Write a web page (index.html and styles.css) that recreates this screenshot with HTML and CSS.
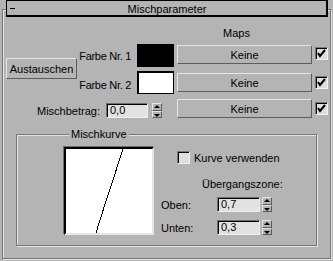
FILE: index.html
```html
<!DOCTYPE html>
<html>
<head>
  <title>Mischparameter</title>
  <link rel="stylesheet" href="styles.css">
</head>
<body>
  <div class="rollout">
    <div class="rollout-title">
      <span class="minus"></span>
      <span class="title-text">Mischparameter</span>
      <span></span>
    </div>

    <div class="params">
      <div class="maps-label">Maps</div>

      <button class="btn swap">Austauschen</button>

      <div class="lbl row1">Farbe Nr. 1</div>
      <div class="swatch row1 black"></div>
      <button class="btn map row1">Keine</button>
      <span class="check row1 on"><svg width="9" height="9" viewBox="0 0 9 9"><path d="M1 4 L3 7 L8 1" fill="none" stroke="#000" stroke-width="2"/></svg></span>

      <div class="lbl row2">Farbe Nr. 2</div>
      <div class="swatch row2 white"></div>
      <button class="btn map row2">Keine</button>
      <span class="check row2 on"><svg width="9" height="9" viewBox="0 0 9 9"><path d="M1 4 L3 7 L8 1" fill="none" stroke="#000" stroke-width="2"/></svg></span>

      <div class="amount row3">
        <span>Mischbetrag:</span>
        <span class="field wide">0,0</span>
        <span class="spin"><span class="up"></span><span class="down"></span></span>
      </div>
      <button class="btn map row3">Keine</button>
      <span class="check row3 on"><svg width="9" height="9" viewBox="0 0 9 9"><path d="M1 4 L3 7 L8 1" fill="none" stroke="#000" stroke-width="2"/></svg></span>
    </div>

    <fieldset class="curve-group">
      <legend>Mischkurve</legend>
      <div class="curve-box">
        <svg width="86" height="84" viewBox="0 0 86 84">
          <path d="M30 84 C 33 74, 40 52, 46 34 S 54 8, 57 0" fill="none" stroke="#000" stroke-width="1" shape-rendering="crispEdges"/>
        </svg>
      </div>
      <div class="curve-side">
        <label class="use-curve"><span class="check"></span>Kurve verwenden</label>
        <div class="zone-title">Übergangszone:</div>
        <div class="zone-row">
          <span class="zone-lbl">Oben:</span>
          <span class="field">0,7</span>
          <span class="spin"><span class="up"></span><span class="down"></span></span>
        </div>
        <div class="zone-row">
          <span class="zone-lbl">Unten:</span>
          <span class="field">0,3</span>
          <span class="spin"><span class="up"></span><span class="down"></span></span>
        </div>
      </div>
    </fieldset>
  </div>
</body>
</html>
```

FILE: styles.css
```css
* {
  box-sizing: border-box;
}

body {
  margin: 0;
  width: 333px;
  height: 261px;
  overflow: hidden;
  background-color: #b4b4b4;
  font-family: "Liberation Sans", Arial, sans-serif;
  font-size: 11px;
  color: #000;
}

.rollout {
  margin: 9px 2px 0 2px;
  height: 250px;
  border: 1px solid #767676;
  box-shadow: inset 1px 1px 0 #e4e4e4, 1px 1px 0 #e4e4e4;
}

.rollout-title {
  display: grid;
  grid-template-columns: 1fr auto 1fr;
  align-items: center;
  height: 17px;
  margin: -10px 2px 0 3px;
  background-color: #b4b4b4;
  border: 1px solid #000;
  box-shadow: inset -1px -1px 0 #000;
}

.minus {
  width: 5px;
  height: 1px;
  margin-left: 3px;
  background-color: #000;
}

.params {
  display: grid;
  grid-template-columns: 71px 55px 42px 138px 16px;
  grid-template-rows: 19px 27px 28px 20px;
  padding: 8px 0 0 3px;
}

.maps-label {
  grid-column: 4;
  grid-row: 1;
  margin: 2px 0 0 49px;
  line-height: 13px;
}

.btn {
  padding: 0;
  margin: 0;
  font-family: inherit;
  font-size: 11px;
  color: #000;
  background-color: #b4b4b4;
  border: 1px solid;
  border-color: #e6e6e6 #5c5c5c #5c5c5c #e6e6e6;
}

.swap {
  grid-column: 1;
  grid-row: 2 / 4;
  align-self: start;
  width: 71px;
  height: 21px;
  margin-top: 14px;
}

.row1 { grid-row: 2; }
.row2 { grid-row: 3; }
.row3 { grid-row: 4; }

.lbl {
  grid-column: 2;
  justify-self: end;
  white-space: nowrap;
  letter-spacing: -0.3px;
  line-height: 13px;
  padding: 6px 1px 0 0;
}

.row2.lbl { padding-top: 8px; }

.swatch {
  grid-column: 3;
  justify-self: end;
  width: 37px;
  height: 23px;
  border: 2px solid #000;
  border-right-width: 1px;
  border-bottom-width: 1px;
}

.black { background-color: #000; }
.white { background-color: #fff; }

.map {
  grid-column: 4;
  justify-self: end;
  width: 135px;
  height: 19px;
  margin-top: 1px;
}

.row2.map { margin-top: 2px; }
.row3.map { margin-top: 0; }

.check {
  display: inline-flex;
  align-items: center;
  justify-content: center;
  width: 13px;
  height: 13px;
  background-color: #dedede;
  border: 1px solid;
  border-color: #7a7a7a #f0f0f0 #f0f0f0 #7a7a7a;
  box-shadow: inset 1px 1px 0 #000;
}

.params .check {
  grid-column: 5;
  justify-self: end;
  margin-top: 3px;
}

.row2.check { margin-top: 5px; }

.amount {
  grid-column: 1 / 4;
  display: flex;
  align-items: center;
  justify-content: flex-end;
  gap: 6px;
  padding-right: 12px;
  height: 15px;
  margin-top: 4px;
}

.field {
  width: 43px;
  height: 15px;
  padding-left: 3px;
  line-height: 13px;
  background-color: #e2e2e2;
  border: 1px solid;
  border-color: #6e6e6e #f0f0f0 #f0f0f0 #6e6e6e;
  box-shadow: inset 1px 1px 0 #000;
}

.field.wide {
  width: 42px;
  margin-right: -2px;
}

.spin {
  display: flex;
  flex-direction: column;
  width: 10px;
  height: 15px;
}

.spin span {
  flex: 1;
  position: relative;
  border: 1px solid;
  border-color: #e6e6e6 #5c5c5c #5c5c5c #e6e6e6;
}

.spin span::after {
  content: "";
  position: absolute;
  left: 1px;
  top: 1px;
  border-left: 3px solid transparent;
  border-right: 3px solid transparent;
}

.spin .up::after {
  border-bottom: 3px solid #000;
}

.spin .down::after {
  border-top: 3px solid #000;
  top: 2px;
}

.curve-group {
  display: flex;
  margin: 9px 13px 0 13px;
  height: 118px;
  padding: 6px 0 0 47px;
  border: 1px solid #767676;
  box-shadow: inset 1px 1px 0 #e4e4e4, 1px 1px 0 #e4e4e4;
}

.curve-group legend {
  margin-left: 5px;
  padding: 0 2px;
  line-height: 13px;
  background-color: #b4b4b4;
}

.curve-box {
  width: 90px;
  height: 88px;
  background-color: #fff;
  border: 2px solid;
  border-color: #000 #e6e6e6 #e6e6e6 #000;
  box-shadow: -1px -1px 0 #6e6e6e;
}

.curve-box svg {
  display: block;
}

.curve-side {
  display: flex;
  flex-direction: column;
  margin-left: 7px;
}

.use-curve {
  display: flex;
  align-items: center;
  gap: 4px;
  margin: 4px 0 0 16px;
}

.zone-title {
  margin: 14px 0 0 41px;
  line-height: 13px;
}

.zone-row {
  display: flex;
  align-items: center;
  gap: 2px;
  margin-top: 6px;
}

.zone-row + .zone-row {
  margin-top: 8px;
}

.zone-lbl {
  width: 54px;
}
```
